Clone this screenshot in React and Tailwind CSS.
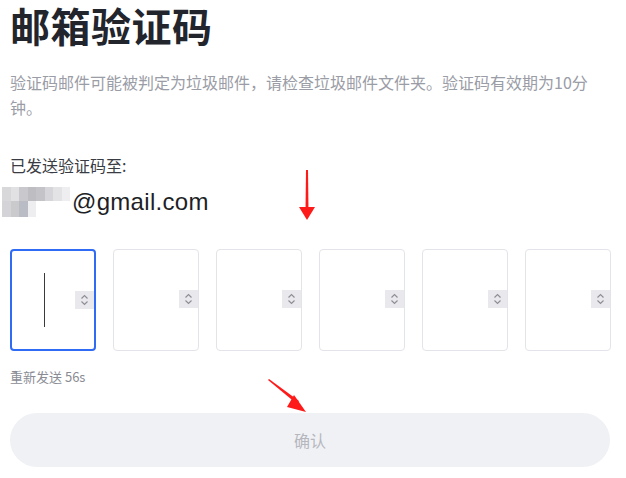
import React from "react";

const cjk = { fontFamily: '"Noto Sans CJK SC", "Noto Sans", sans-serif' };

function Spinner() {
  return (
    <div className="absolute right-0 top-[40px] w-[19px] h-[18px] bg-[#e9e9ed] flex items-center justify-center">
      <svg width="9" height="12" viewBox="0 0 9 12" fill="none" stroke="#8d8e96" strokeWidth="1.2">
        <path d="M1.5 4.5 L4.5 1.5 L7.5 4.5" />
        <path d="M1.5 7.5 L4.5 10.5 L7.5 7.5" />
      </svg>
    </div>
  );
}

function CodeBox({ active }) {
  return (
    <div
      className={
        "relative shrink-0 w-[86px] h-[102px] rounded-[4px] bg-white " +
        (active ? "border-2 border-[#2f6bf5]" : "border border-[#e3e4ea]")
      }
    >
      {active && <div className="absolute left-[32px] top-[22px] w-[1px] h-[54px] bg-[#3a3a3a]" />}
      <Spinner />
    </div>
  );
}

function BlurredName() {
  const top = ["#d8d8db", "#e1e1e4", "#c9c9cd", "#bdbdc2", "#c4c4c8", "#d6d6da", "#e3e3e6", "#eeeef0"];
  const bottom = ["#d4d4d8", "#cacacd", "#b9bcc4", "#eeeef1", "#ffffff", "#ffffff", "#ffffff", "#ffffff"];
  return (
    <div className="flex flex-col w-[68px] h-[30px] mr-[2px]">
      <div className="flex h-[14px]">
        {top.map((c, i) => (
          <div key={i} className="flex-1" style={{ background: c }} />
        ))}
      </div>
      <div className="flex h-[16px]">
        {bottom.map((c, i) => (
          <div key={i} className="flex-1" style={{ background: c }} />
        ))}
      </div>
    </div>
  );
}

export default function App() {
  return (
    <div className="relative w-[626px] h-[478px] bg-white overflow-hidden" style={cjk}>
      <div className="px-[10px] pt-[1px]">
        <h1 className="text-[40px] leading-[48px] font-bold text-[#23252d] tracking-[0.5px]">邮箱验证码</h1>
        <p className="mt-[21px] text-[16px] leading-[25px] text-[#9a9ca6] w-[600px]">
          验证码邮件可能被判定为垃圾邮件，请检查垃圾邮件文件夹。验证码有效期为10分钟。
        </p>

        <div className="mt-[33px] text-[16px] leading-[24px] text-[#3a3c44]">已发送验证码至:</div>
        <div className="mt-[10px] flex items-center ml-[-8px]">
          <BlurredName />
          <span
            className="text-[24px] leading-[30px] text-[#1d1f26] tracking-[0.3px]"
            style={{ fontFamily: '"Liberation Sans", Arial, sans-serif' }}
          >
            @gmail.com
          </span>
        </div>

        <div className="mt-[32px] flex gap-[17px]">
          <CodeBox active />
          <CodeBox />
          <CodeBox />
          <CodeBox />
          <CodeBox />
          <CodeBox />
        </div>

        <div className="mt-[16px] text-[13px] leading-[20px] text-[#8a8c94]">重新发送 56s</div>

        <button className="mt-[26px] w-[600px] h-[54px] rounded-full bg-[#f0f1f5] text-[16px] text-[#b6b7bd]">
          确认
        </button>
      </div>

      {/* annotation arrows */}
      <svg className="absolute left-[296px] top-[168px]" width="22" height="54" viewBox="0 0 22 54">
        <path d="M10 2 L12 2 L12.5 42 L9.5 42 Z" fill="#ff1a1a" />
        <path d="M3 39 L19 39 L11 52 Z" fill="#ff1a1a" />
      </svg>
      <svg className="absolute left-[264px] top-[376px]" width="48" height="40" viewBox="0 0 48 40">
        <path d="M4 4 L5 3 L35 25 L33 28 Z" fill="#ff1a1a" />
        <path d="M30 19 L42 36 L23 31 Z" fill="#ff1a1a" />
      </svg>
    </div>
  );
}
